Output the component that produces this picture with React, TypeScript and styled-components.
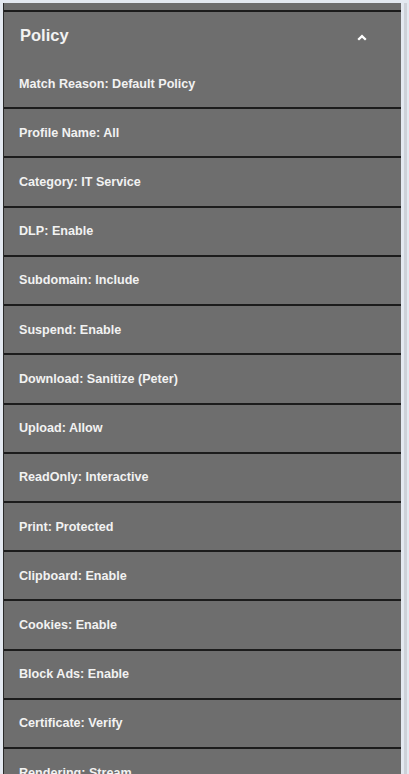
import React from 'react'
import styled, { createGlobalStyle } from 'styled-components'

const GlobalStyle = createGlobalStyle`
  html, body {
    margin: 0;
    padding: 0;
    background: #e4e9f1;
    overflow: hidden;
  }
`

const items = [
  'Match Reason: Default Policy',
  'Profile Name: All',
  'Category: IT Service',
  'DLP: Enable',
  'Subdomain: Include',
  'Suspend: Enable',
  'Download: Sanitize (Peter)',
  'Upload: Allow',
  'ReadOnly: Interactive',
  'Print: Protected',
  'Clipboard: Enable',
  'Cookies: Enable',
  'Block Ads: Enable',
  'Certificate: Verify',
  'Rendering: Stream',
]

export default function App(): JSX.Element {
  return (
    <>
      <GlobalStyle />
      <Page>
        <Panel>
          <PrevSection />
          <Header>
            <Title>Policy</Title>
            <Chevron width="10" height="7" viewBox="0 0 10 7">
              <path d="M5 0.5 L9.6 5 L8 6.6 L5 3.7 L2 6.6 L0.4 5 Z" fill="#ffffff" />
            </Chevron>
          </Header>
          {items.map((text, i) => (
            <Row key={text} first={i === 0}>
              {text}
            </Row>
          ))}
        </Panel>
        <Gutter>
          <ScrollTrack />
        </Gutter>
      </Page>
    </>
  )
}

const Page = styled.div`
  display: flex;
  flex-direction: row;
  height: 774px;
  padding: 3px 0 0 3px;
  box-sizing: border-box;
  overflow: hidden;
`
const Panel = styled.div`
  width: 397px;
  background: #6e6e6e;
  border-left: 1px solid #2a2a2a;
  display: flex;
  flex-direction: column;
  overflow: hidden;
  font-family: 'Liberation Sans', Arial, sans-serif;
  color: #f2f2f2;
`
const PrevSection = styled.div`
  flex: none;
  height: 7px;
  border-bottom: 2px solid #1c1c1c;
`
const Header = styled.div`
  flex: none;
  height: 48px;
  display: flex;
  align-items: center;
  justify-content: space-between;
  padding: 0 34px 0 16px;
`
const Title = styled.div`
  font-size: 16.5px;
  font-weight: bold;
  margin-top: -1px;
`
const Chevron = styled.svg`
  display: block;
  margin-top: 2px;
`
const Row = styled.div<{ first?: boolean }>`
  flex: none;
  height: 47.23px;
  display: flex;
  align-items: center;
  padding-left: 15px;
  font-size: 12.6px;
  font-weight: bold;
  border-top: ${(p) => (p.first ? 'none' : '2px solid #1c1c1c')};
`
const Gutter = styled.div`
  width: 4px;
  display: flex;
  padding-left: 3px;
`
const ScrollTrack = styled.div`
  width: 3px;
  background: #cdd1d8;
`
